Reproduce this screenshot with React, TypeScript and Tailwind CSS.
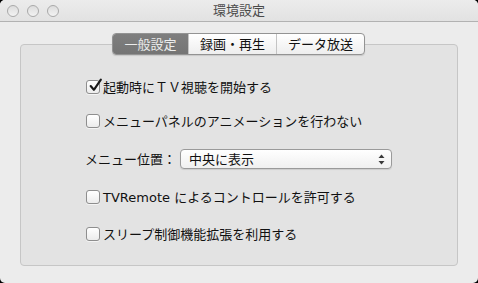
import { useState } from "react";

const font = {
  fontFamily:
    '"Lucida Grande", "DejaVu Sans", "Noto Sans CJK JP", sans-serif',
};

function Check({ checked, label }: { checked?: boolean; label: string }) {
  return (
    <div className="flex h-[14px] items-center">
      <div className="relative h-[14px] w-[14px] shrink-0 rounded-[3px] border border-[#8e8e8e] bg-gradient-to-b from-[#ffffff] to-[#ececec] shadow-[0_1px_0_rgba(255,255,255,0.6)]">
        {checked && (
          <svg
            viewBox="0 0 14 14"
            className="absolute left-[1px] top-[-3px] h-[15px] w-[15px]"
          >
            <path
              d="M2.5 7.5 L5.5 11 L12 1.5"
              fill="none"
              stroke="#1a1a1a"
              strokeWidth="2"
              strokeLinecap="round"
              strokeLinejoin="round"
            />
          </svg>
        )}
      </div>
      <span className="ml-[3px] text-[13px] leading-none text-[#111]">
        {label}
      </span>
    </div>
  );
}

export default function App() {
  const [tab, setTab] = useState(0);
  const tabs = [
    { name: "一般設定", w: "w-[75px]" },
    { name: "録画・再生", w: "w-[88px]" },
    { name: "データ放送", w: "w-[88px]" },
  ];

  return (
    <div className="h-[283px] w-[478px] bg-black" style={font}>
      <div className="flex h-[283px] w-[478px] flex-col overflow-hidden rounded-[5px] bg-[#ececec]">
        {/* title bar */}
        <div className="relative flex h-[22px] shrink-0 items-center justify-center border-b border-[#b2b2b2] bg-gradient-to-b from-[#ececec] to-[#e2e2e2]">
          <div className="absolute left-[7px] top-[5px] flex gap-[8px]">
            {[0, 1, 2].map((i) => (
              <div
                key={i}
                className="h-[12px] w-[12px] rounded-full border border-[#a9a9a9] bg-gradient-to-b from-[#dcdcdc] to-[#f3f3f3]"
              />
            ))}
          </div>
          <span className="text-[13px] leading-none text-[#4a4a4a]">
            環境設定
          </span>
        </div>

        {/* tabs */}
        <div className="relative z-10 mt-[11px] flex justify-center">
          <div className="ml-[-1px] flex h-[22px] overflow-hidden rounded-[4px] border border-[#939393] bg-gradient-to-b from-[#ffffff] to-[#eeeeee] shadow-[0_1px_1px_rgba(0,0,0,0.12)]">
            {tabs.map((t, i) => (
              <button
                key={t.name}
                onClick={() => setTab(i)}
                className={`${t.w} flex items-center justify-center text-[13px] leading-none ${
                  i > 0 ? "border-l border-[#c4c4c4]" : ""
                } ${
                  tab === i
                    ? "bg-gradient-to-b from-[#7f7f7f] to-[#757575] text-[#ededed]"
                    : "text-[#111]"
                }`}
              >
                {t.name}
              </button>
            ))}
          </div>
        </div>

        {/* group box */}
        <div className="mx-[20px] mt-[-11px] h-[222px] rounded-[4px] border border-[#c6c6c6] bg-[#e3e3e3] pl-[65px] pt-[35px]">
          <Check checked label="起動時にＴＶ視聴を開始する" />
          <div className="mt-[20px]">
            <Check label="メニューパネルのアニメーションを行わない" />
          </div>
          <div className="mt-[21px] flex h-[20px] items-center">
            <span className="ml-[-1px] w-[95px] text-[13px] leading-none text-[#111]">
              メニュー位置：
            </span>
            <div className="flex h-[20px] w-[212px] items-center justify-between rounded-[4px] border border-[#9a9a9a] bg-gradient-to-b from-[#ffffff] to-[#f0f0f0] pl-[8px] pr-[6px] shadow-[0_1px_1px_rgba(0,0,0,0.1)]">
              <span className="text-[13px] leading-none text-[#111]">
                中央に表示
              </span>
              <svg viewBox="0 0 7 11" className="h-[11px] w-[7px]">
                <path d="M3.5 0.5 L6.5 4 L0.5 4 Z" fill="#3a3a3a" />
                <path d="M3.5 10.5 L6.5 7 L0.5 7 Z" fill="#3a3a3a" />
              </svg>
            </div>
          </div>
          <div className="mt-[21px]">
            <Check label="TVRemote によるコントロールを許可する" />
          </div>
          <div className="mt-[23px]">
            <Check label="スリープ制御機能拡張を利用する" />
          </div>
        </div>
      </div>
    </div>
  );
}
